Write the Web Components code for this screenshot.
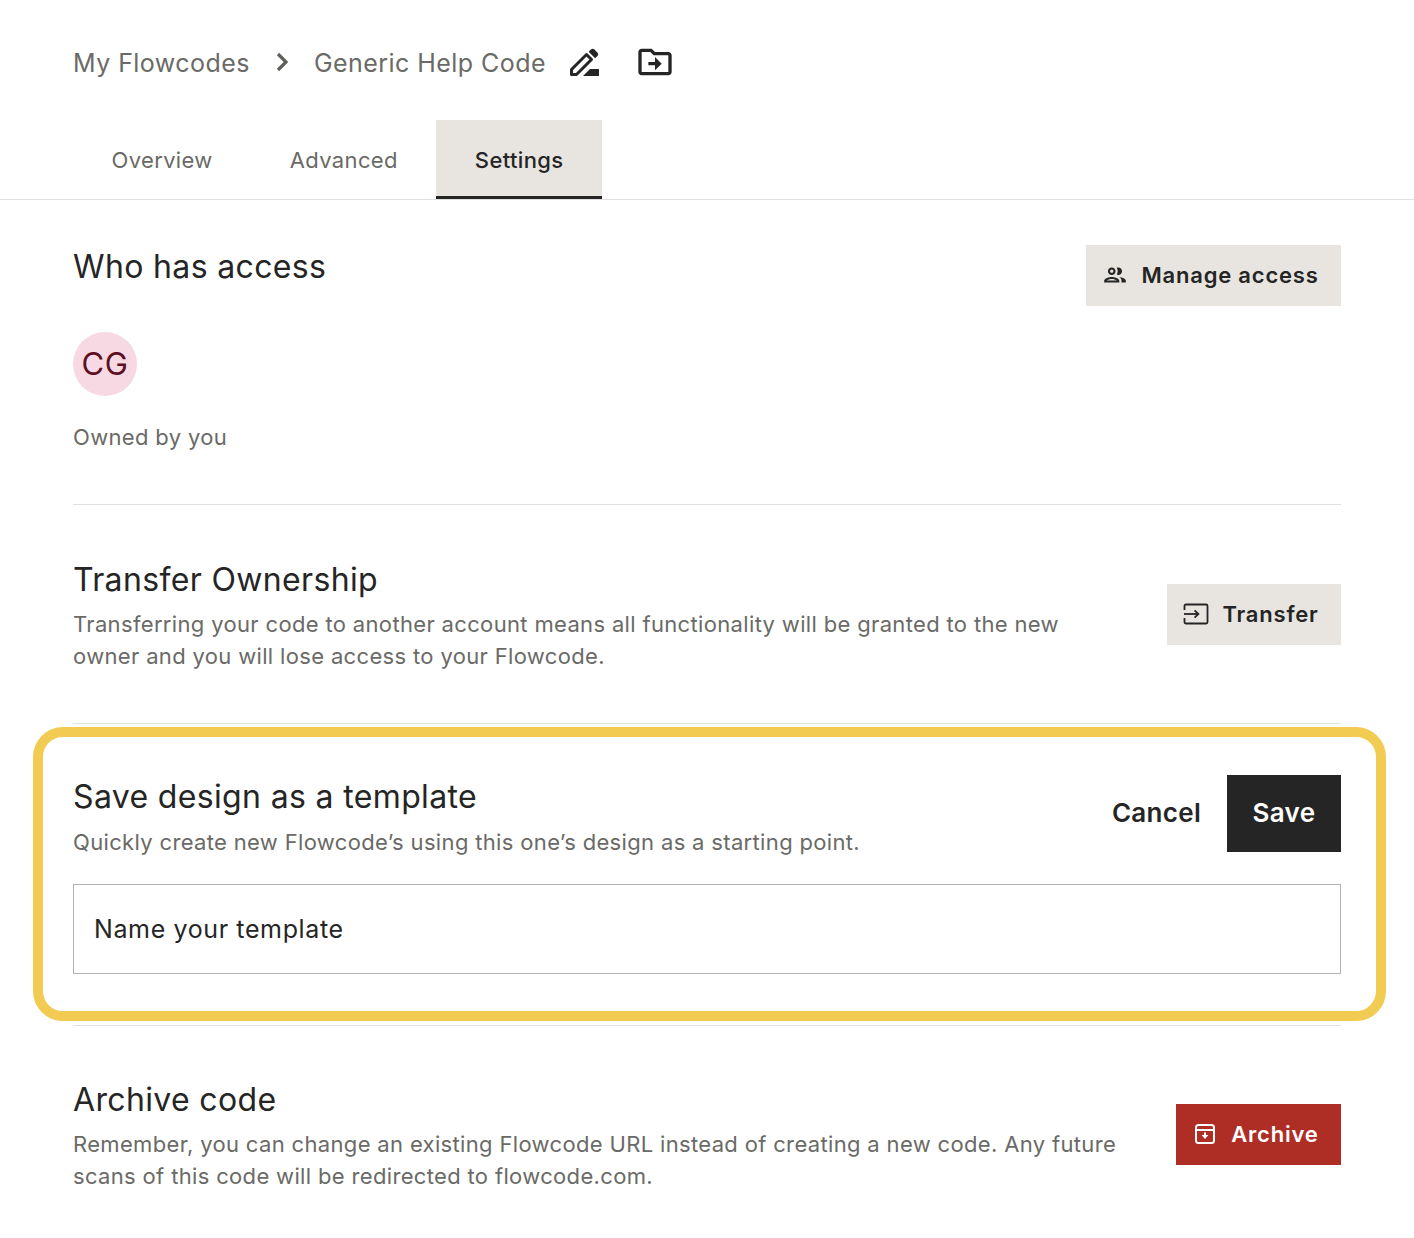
<!DOCTYPE html>
<html lang="en">
<head>
<meta charset="utf-8">
<title>Settings</title>
<style>
  html, body { margin: 0; background: #fff; }
  body { font-family: Inter, "Liberation Sans", sans-serif; color: #252525; }
</style>
</head>
<body>
<fc-breadcrumb></fc-breadcrumb>
<fc-tabs></fc-tabs>
<fc-section pad="44" height="305" action-top="1" hr>
  <span slot="title">Who has access</span>
  <fc-button slot="action" icon="people">Manage access</fc-button>
  <fc-owner></fc-owner>
</fc-section>
<fc-section pad="52" height="219" action-top="27" hr>
  <span slot="title">Transfer Ownership</span>
  <span>Transferring your code to another account means all functionality will be granted to the new owner and you will lose access to your Flowcode.</span>
  <fc-button slot="action" icon="transfer">Transfer</fc-button>
</fc-section>
<fc-template-form></fc-template-form>
<fc-section pad="51" height="212" action-top="27">
  <span slot="title">Archive code</span>
  <span>Remember, you can change an existing Flowcode URL instead of creating a new code. Any future scans of this code will be redirected to flowcode.com.</span>
  <fc-button slot="action" icon="archive" variant="danger">Archive</fc-button>
</fc-section>

<script>
const ICONS = {
  people: '<svg width="26" height="26" viewBox="0 0 24 24" fill="currentColor"><path d="M9 13.75c-2.34 0-7 1.17-7 3.5V19h14v-1.75c0-2.33-4.66-3.5-7-3.5zM4.34 17c.84-.58 2.87-1.25 4.66-1.25s3.82.67 4.66 1.25H4.34zM9 12c1.93 0 3.5-1.57 3.5-3.5S10.93 5 9 5 5.5 6.57 5.5 8.5 7.07 12 9 12zm0-5c.83 0 1.5.67 1.5 1.5S9.83 10 9 10s-1.5-.67-1.5-1.5S8.17 7 9 7zm7.04 6.81c1.16.84 1.96 1.96 1.96 3.44V19h4v-1.75c0-2.02-3.5-3.17-5.96-3.44zM15 12c1.93 0 3.5-1.57 3.5-3.5S16.93 5 15 5c-.54 0-1.04.13-1.5.35.63.89 1 1.98 1 3.15s-.37 2.26-1 3.15c.46.22.96.35 1.5.35z"/></svg>',
  transfer: '<svg width="26" height="22" viewBox="0 0 26 22" fill="none" stroke="currentColor" stroke-width="1.8"><path d="M1.5 7V2.9C1.5 2 2 1.5 2.9 1.5h20.2c.9 0 1.4.5 1.4 1.4v16.2c0 .9-.5 1.4-1.4 1.4H2.9c-.9 0-1.4-.5-1.4-1.4V15"/><path d="M1 11h14"/><path d="M11.6 7.4l3.8 3.6-3.8 3.6"/></svg>',
  archive: '<svg width="20" height="20" viewBox="0 0 20 20" fill="none" stroke="currentColor" stroke-width="2"><rect x="1" y="1" width="18" height="18" rx="2.5"/><path d="M1 6h18"/><path d="M10 8.5v3.5"/><path d="M6.6 11h6.8L10 15z" fill="currentColor" stroke="none"/></svg>',
  rename: '<svg width="40" height="40" viewBox="0 0 40 40"><path d="M7.500 32.500v-5L22.500 12.500l5 5L12.500 32.500z" fill="none" stroke="currentColor" stroke-width="3" stroke-linejoin="round"/><path d="M24.600 9.800l2.600-2.500c.9-.8 2.200-.8 3 0l3.400 3.400c.8.8.8 2.100 0 3l-2.500 2.600z" fill="currentColor"/><path d="M19 34l7-7h9v7z" fill="currentColor"/></svg>',
  move: '<svg width="40" height="40" viewBox="0 0 24 24" fill="currentColor"><path d="M20 6h-8l-2-2H4c-1.1 0-1.99.9-1.99 2L2 18c0 1.1.9 2 2 2h16c1.1 0 2-.9 2-2V8c0-1.1-.9-2-2-2zm0 12H4V6h5.17l2 2H20v10zm-8-4H8v-2h4V9l4 4-4 4v-3z"/></svg>',
  chevron: '<svg width="14" height="20" viewBox="0 0 14 20" fill="none" stroke="currentColor" stroke-width="3.200"><path d="M3 2l8 8-8 8"/></svg>'
};

class FcBreadcrumb extends HTMLElement {
  constructor() {
    super();
    this.attachShadow({ mode: 'open' });
  }

  connectedCallback() {
    this.shadowRoot.innerHTML = `
      <style>
        :host { display: flex; align-items: center; height: 120px; padding: 4px 0 0 73px; box-sizing: border-box; font-size: 25px; letter-spacing: .45px; color: #6a6a66; }
        .t { padding-top: 2px; }
        .chev { display: flex; margin: 0 25px 0 25px; color: #5f5f5c; }
        .ico { display: flex; color: #252525; }
        .edit { margin-left: 18px; }
        .move { margin-left: 31px; }
      </style>
      <span class="t">My Flowcodes</span>
      <span class="chev">${ICONS.chevron}</span>
      <span class="t">Generic Help Code</span>
      <span class="ico edit">${ICONS.rename}</span>
      <span class="ico move">${ICONS.move}</span>`;
  }
}

class FcTabs extends HTMLElement {
  constructor() {
    super();
    this.attachShadow({ mode: 'open' });
  }

  connectedCallback() {
    this.shadowRoot.innerHTML = `
      <style>
        :host { display: flex; height: 80px; padding-left: 73px; box-sizing: border-box; border-bottom: 1px solid #e2e0dc; font-size: 22px; letter-spacing: .36px; color: #6a6a66; }
        .tab { display: flex; align-items: center; padding: 4px 38.5px 0; box-sizing: border-box; height: 79px; border-bottom: 3px solid transparent; }
        .on { background: #e8e5e1; color: #252525; border-bottom-color: #252525; font-weight: 450; }
      </style>
      <div class="tab">Overview</div>
      <div class="tab">Advanced</div>
      <div class="tab on">Settings</div>`;
  }
}

class FcButton extends HTMLElement {
  constructor() {
    super();
    this.attachShadow({ mode: 'open' });
  }

  connectedCallback() {
    const danger = this.getAttribute('variant') === 'danger';
    const icon = ICONS[this.getAttribute('icon')] || '';
    this.shadowRoot.innerHTML = `
      <style>
        :host { display: inline-flex; align-items: center; gap: 12px; height: 61px; padding: 0 22.4px 2px 17px; box-sizing: border-box; flex: none; font-size: 22px; font-weight: 600; letter-spacing: .8px; white-space: nowrap; background: ${danger ? '#ae2d24' : '#e8e5e1'}; color: ${danger ? '#fff' : '#252525'}; }
        span { display: flex; justify-content: center; width: 26px; margin-left: -1px; margin-right: 1px; }
      </style>
      <span>${icon}</span><slot></slot>`;
  }
}

class FcOwner extends HTMLElement {
  constructor() {
    super();
    this.attachShadow({ mode: 'open' });
  }

  connectedCallback() {
    this.shadowRoot.innerHTML = `
      <style>
        :host { display: block; margin-top: 42px; }
        .avatar { display: flex; align-items: center; justify-content: center; width: 64px; height: 64px; border-radius: 50%; background: #f6d9e2; color: #5c0f22; font-size: 31px; letter-spacing: .5px; }
        p { margin: 25px 0 0; line-height: 32px; }
      </style>
      <div class="avatar">CG</div>
      <p>Owned by you</p>`;
  }
}

class FcSection extends HTMLElement {
  constructor() {
    super();
    this.attachShadow({ mode: 'open' });
  }

  connectedCallback() {
    const pad = this.getAttribute('pad') || 52;
    const height = this.getAttribute('height') || 200;
    const actionTop = this.getAttribute('action-top') || 0;
    this.shadowRoot.innerHTML = `
      <style>
        :host { display: flex; justify-content: space-between; gap: 48px; box-sizing: border-box; margin: 0 73px; height: ${height}px; padding-top: ${pad}px; font-size: 22px; letter-spacing: .34px; line-height: 32px; color: #6a6a66; }
        :host([hr]) { border-bottom: 1px solid #e2e0dc; }
        h2 { margin: 0 0 5px; font-size: 32px; font-weight: 430; line-height: 46px; letter-spacing: .35px; color: #252525; }
        .body { flex: 1; }
        .action { flex: none; padding-top: ${actionTop}px; }
      </style>
      <div class="body"><h2><slot name="title"></slot></h2><slot></slot></div>
      <div class="action"><slot name="action"></slot></div>`;
  }
}

class FcTemplateForm extends HTMLElement {
  constructor() {
    super();
    this.attachShadow({ mode: 'open' });
  }

  connectedCallback() {
    this.shadowRoot.innerHTML = `
      <style>
        :host { display: block; position: relative; box-sizing: border-box; margin: 0 73px; height: 302px; padding-top: 50px; border-bottom: 1px solid #e2e0dc; }
        .ring { position: absolute; left: -40px; right: -45px; top: 3px; height: 294px; box-sizing: border-box; border: 10px solid #f2cb52; border-radius: 30px; }
        .row { display: flex; justify-content: space-between; align-items: flex-start; }
        h2 { margin: 0 0 6px; font-size: 32px; font-weight: 430; line-height: 46px; letter-spacing: .35px; color: #252525; }
        p { margin: 0; font-size: 22px; letter-spacing: .34px; line-height: 32px; color: #6a6a66; }
        .btns { display: flex; align-items: center; gap: 26px; margin-top: 1px; font-size: 26px; font-weight: 600; letter-spacing: .3px; }
        .btns span { padding-bottom: 2px; box-sizing: border-box; }
        .save { display: flex; align-items: center; justify-content: center; width: 114px; height: 77px; background: #252525; color: #fff; }
        .field { display: flex; align-items: center; height: 90px; margin-top: 26px; padding-left: 20px; box-sizing: border-box; border: 1px solid #b3b3b0; font-size: 25px; letter-spacing: .62px; color: #252525; }
      </style>
      <div class="ring"></div>
      <div class="row">
        <div><h2>Save design as a template</h2><p>Quickly create new Flowcode’s using this one’s design as a starting point.</p></div>
        <div class="btns"><span>Cancel</span><span class="save">Save</span></div>
      </div>
      <div class="field">Name your template</div>`;
  }
}

customElements.define('fc-breadcrumb', FcBreadcrumb);
customElements.define('fc-tabs', FcTabs);
customElements.define('fc-button', FcButton);
customElements.define('fc-owner', FcOwner);
customElements.define('fc-section', FcSection);
customElements.define('fc-template-form', FcTemplateForm);
</script>
</body>
</html>
